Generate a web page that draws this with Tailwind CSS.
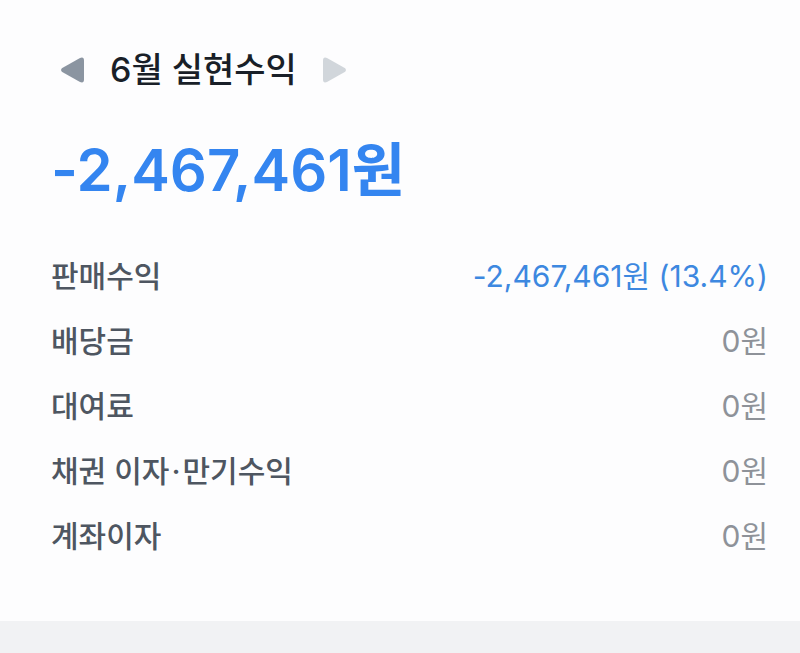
<!doctype html>
<html lang="ko">
<head>
    <meta charset="UTF-8" />
    <meta name="viewport" content="width=device-width, initial-scale=1.0" />
    <script src="https://cdn.jsdelivr.net/npm/@tailwindcss/browser@4"></script>
    <title>실현수익</title>
</head>
<body class="min-h-screen bg-[#f1f2f4] font-['Inter','Noto_Sans_CJK_KR',sans-serif]">
    <main class="bg-[#fdfdfe] pt-11 pb-13 pl-[51px] pr-8">
        <header class="flex items-center gap-[26px] px-[9px]">
            <button type="button" aria-label="이전 달" class="text-[#8b95a1]">
                <svg class="w-6 h-7" viewBox="0 0 24 28" fill="currentColor">
                    <path d="M1.8 12.3 20 2Q24 .5 24 4.5V23.5Q24 27.5 20 26L1.8 15.7Q0 14 1.8 12.3Z" />
                </svg>
            </button>
            <h1 class="text-[34px] leading-[52px] font-medium text-[#191f28]">6월 실현수익</h1>
            <button type="button" aria-label="다음 달" class="text-[#d1d6db]">
                <svg class="w-6 h-7" viewBox="0 0 24 28" fill="currentColor">
                    <path d="M22.2 12.3 4 2Q0 .5 0 4.5V23.5Q0 27.5 4 26L22.2 15.7Q24 14 22.2 12.3Z" />
                </svg>
            </button>
        </header>

        <p class="mt-[34px] text-[58px] leading-[80px] font-semibold text-[#3485f0]">-2,467,461원</p>

        <dl class="mt-[34px] text-[30px] leading-[65px] text-[#4e5661]">
            <div class="flex justify-between">
                <dt class="font-medium">판매수익</dt>
                <dd class="text-[#3d88e0]">-2,467,461원 (13.4%)</dd>
            </div>
            <div class="flex justify-between">
                <dt class="font-medium">배당금</dt>
                <dd class="text-[#8e9299]">0원</dd>
            </div>
            <div class="flex justify-between">
                <dt class="font-medium">대여료</dt>
                <dd class="text-[#8e9299]">0원</dd>
            </div>
            <div class="flex justify-between">
                <dt class="font-medium">채권 이자<span class="mx-0.5">·</span>만기수익</dt>
                <dd class="text-[#8e9299]">0원</dd>
            </div>
            <div class="flex justify-between">
                <dt class="font-medium">계좌이자</dt>
                <dd class="text-[#8e9299]">0원</dd>
            </div>
        </dl>
    </main>
</body>
</html>
